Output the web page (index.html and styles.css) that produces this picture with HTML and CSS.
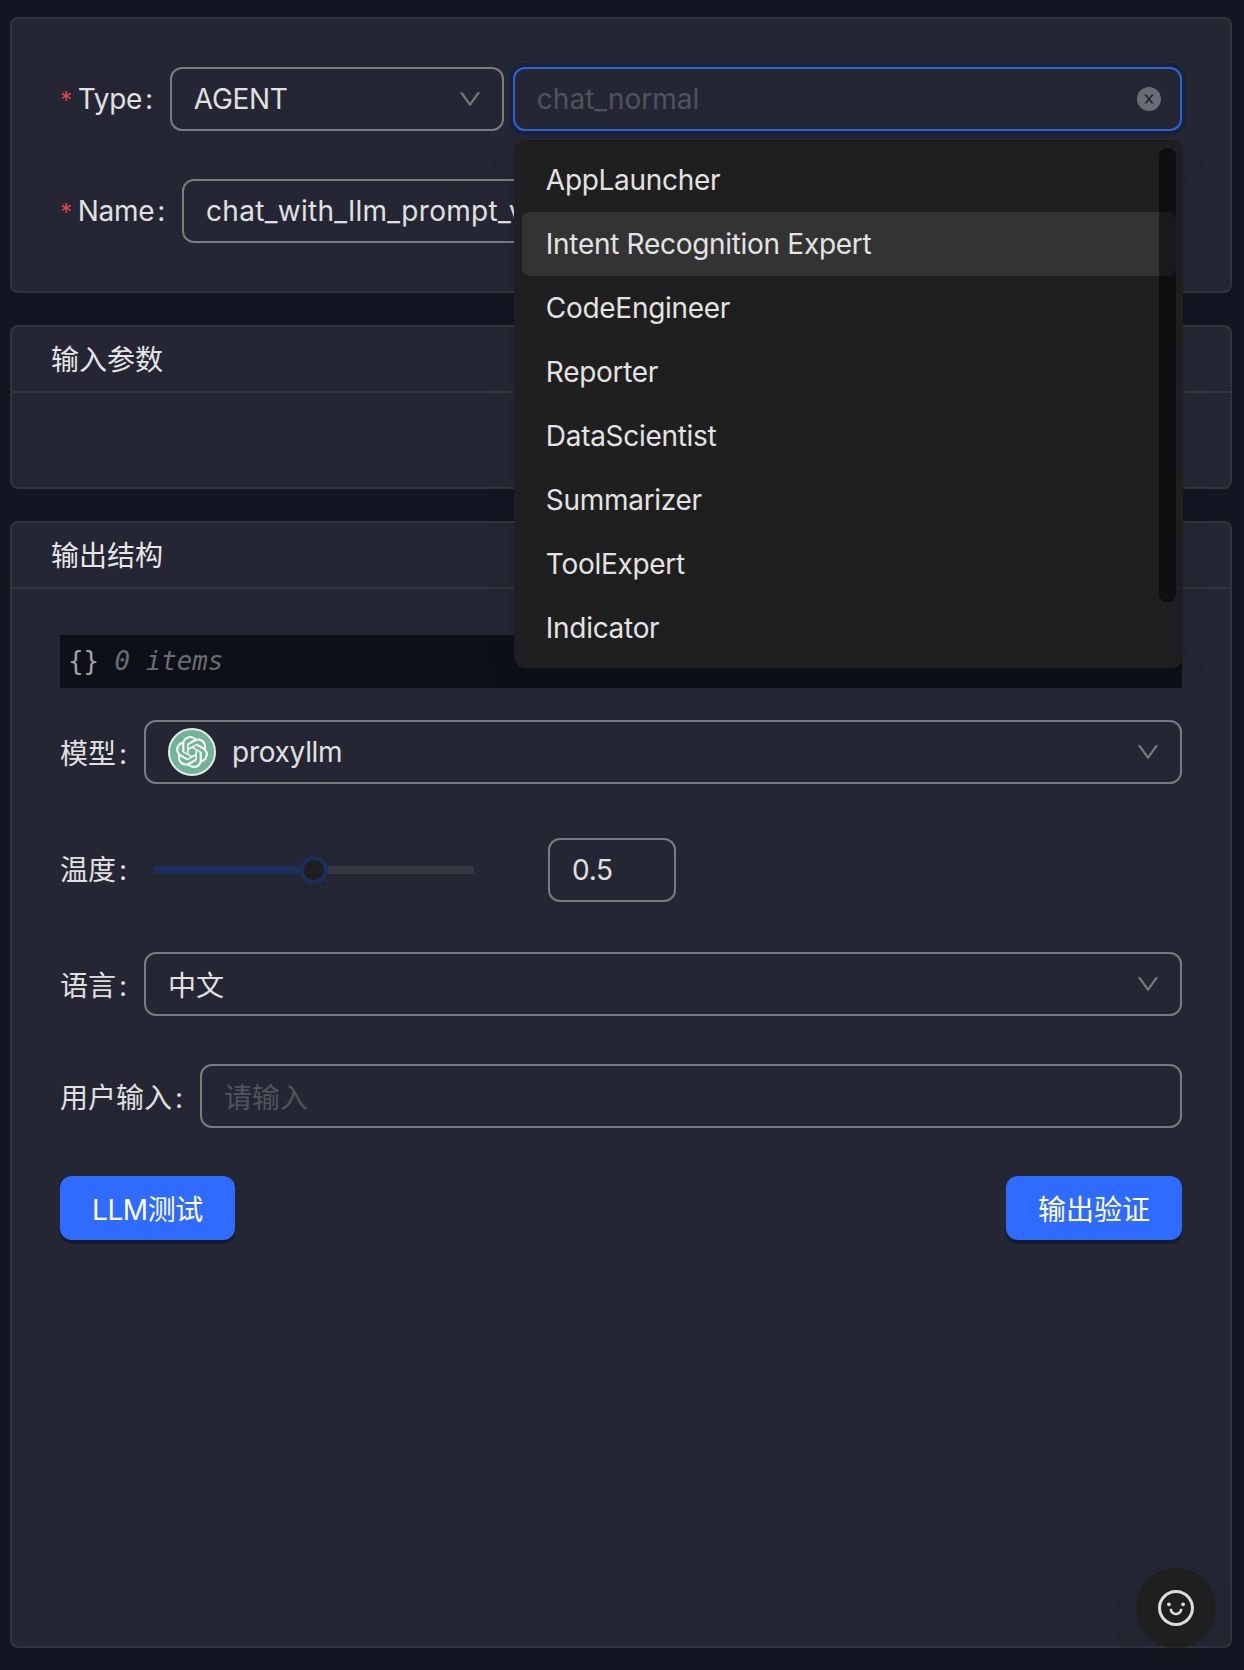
FILE: index.html
```html
<!DOCTYPE html>
<html lang="zh">
<head>
    <meta charset="UTF-8">
    <title>Prompt</title>
    <link rel="stylesheet" href="styles.css">
</head>
<body>

    <div class="card card-form">
        <div class="row">
            <div class="label required latin">Type<span class="colon">:</span></div>
            <div class="control type-select">
                <span class="value latin">AGENT</span>
                <svg class="arrow" viewBox="64 64 896 896"><path d="M884 256h-75c-5.1 0-9.9 2.5-12.9 6.6L512 654.2 227.9 262.6c-3-4.1-7.8-6.6-12.9-6.6h-75c-6.5 0-10.3 7.4-6.5 12.7l352.6 486.1c12.8 17.6 39 17.6 51.7 0l352.6-486.1c3.9-5.3.1-12.7-6.4-12.7z"/></svg>
            </div>
            <div class="combo">
                <div class="control focused">
                    <span class="placeholder">chat_normal</span>
                    <svg class="clear" viewBox="64 64 896 896"><path d="M512 64C264.6 64 64 264.6 64 512s200.6 448 448 448 448-200.6 448-448S759.4 64 512 64zm165.4 618.2l-66-.3L512 563.4l-99.3 118.4-66.1.3c-4.4 0-8-3.5-8-8 0-1.9.7-3.7 1.9-5.2l130.1-155L340.5 359a8.32 8.32 0 0 1-1.9-5.2c0-4.4 3.6-8 8-8l66.1.3L512 464.6l99.3-118.4 66-.3c4.4 0 8 3.5 8 8 0 1.9-.7 3.7-1.9 5.2L553.5 514l130 155c1.2 1.5 1.9 3.3 1.9 5.2 0 4.4-3.6 8-8 8z"/></svg>
                </div>
                <div class="dropdown latin">
                    <div class="option">AppLauncher</div>
                    <div class="option active">Intent Recognition Expert</div>
                    <div class="option">CodeEngineer</div>
                    <div class="option">Reporter</div>
                    <div class="option">DataScientist</div>
                    <div class="option">Summarizer</div>
                    <div class="option">ToolExpert</div>
                    <div class="option">Indicator</div>
                    <div class="scrollbar"></div>
                </div>
            </div>
        </div>
        <div class="row">
            <div class="label required latin">Name<span class="colon">:</span></div>
            <div class="control"><span class="value name-value">chat_with_llm_prompt_v</span></div>
        </div>
    </div>

    <div class="card">
        <div class="card-head">输入参数</div>
        <div class="card-body empty"></div>
    </div>

    <div class="card card-fill">
        <div class="card-head">输出结构</div>
        <div class="card-body">
            <div class="json"><span class="brace">{}</span> <em>0 items</em></div>

            <div class="row row-model">
                <div class="label cjk">模型<span class="colon">:</span></div>
                <div class="control">
                    <span class="model-icon">
                        <svg viewBox="0 0 24 24"><path d="M22.2819 9.8211a5.9847 5.9847 0 0 0-.5157-4.9108 6.0462 6.0462 0 0 0-6.5098-2.9A6.0651 6.0651 0 0 0 4.9807 4.1818a5.9847 5.9847 0 0 0-3.9977 2.9 6.0462 6.0462 0 0 0 .7427 7.0966 5.98 5.98 0 0 0 .511 4.9107 6.051 6.051 0 0 0 6.5146 2.9001A5.9847 5.9847 0 0 0 13.2599 24a6.0557 6.0557 0 0 0 5.7718-4.2058 5.9894 5.9894 0 0 0 3.9977-2.9001 6.0557 6.0557 0 0 0-.7475-7.0729zm-9.022 12.6081a4.4755 4.4755 0 0 1-2.8764-1.0408l.1419-.0804 4.7783-2.7582a.7948.7948 0 0 0 .3927-.6813v-6.7369l2.02 1.1686a.071.071 0 0 1 .038.052v5.5826a4.504 4.504 0 0 1-4.4945 4.4944zm-9.6607-4.1254a4.4708 4.4708 0 0 1-.5346-3.0137l.142.0852 4.783 2.7582a.7712.7712 0 0 0 .7806 0l5.8428-3.3685v2.3324a.0804.0804 0 0 1-.0332.0615L9.74 19.9502a4.4992 4.4992 0 0 1-6.1408-1.6464zM2.3408 7.8956a4.485 4.485 0 0 1 2.3655-1.9728V11.6a.7664.7664 0 0 0 .3879.6765l5.8144 3.3543-2.0201 1.1685a.0757.0757 0 0 1-.071 0l-4.8303-2.7865A4.504 4.504 0 0 1 2.3408 7.872zm16.5963 3.8558L13.1038 8.364 15.1192 7.2a.0757.0757 0 0 1 .071 0l4.8303 2.7913a4.4944 4.4944 0 0 1-.6765 8.1042v-5.6772a.79.79 0 0 0-.407-.667zm2.0107-3.0231l-.142-.0852-4.7735-2.7818a.7759.7759 0 0 0-.7854 0L9.409 9.2297V6.8974a.0662.0662 0 0 1 .0284-.0615l4.8303-2.7866a4.4992 4.4992 0 0 1 6.6802 4.66zM8.3065 12.863l-2.02-1.1638a.0804.0804 0 0 1-.038-.0567V6.0742a4.4992 4.4992 0 0 1 7.3757-3.4537l-.142.0805L8.704 5.459a.7948.7948 0 0 0-.3927.6813zm1.0976-2.3654l2.602-1.4998 2.6069 1.4998v2.9994l-2.5974 1.4997-2.6067-1.4997Z"/></svg>
                    </span>
                    <span class="value latin">proxyllm</span>
                    <svg class="arrow" viewBox="64 64 896 896"><path d="M884 256h-75c-5.1 0-9.9 2.5-12.9 6.6L512 654.2 227.9 262.6c-3-4.1-7.8-6.6-12.9-6.6h-75c-6.5 0-10.3 7.4-6.5 12.7l352.6 486.1c12.8 17.6 39 17.6 51.7 0l352.6-486.1c3.9-5.3.1-12.7-6.4-12.7z"/></svg>
                </div>
            </div>

            <div class="row row-temp">
                <div class="label">温度<span class="colon">:</span></div>
                <div class="slider">
                    <div class="slider-fill"></div>
                    <div class="slider-handle"></div>
                </div>
                <div class="control number"><span class="value latin">0.5</span></div>
            </div>

            <div class="row row-lang">
                <div class="label cjk">语言<span class="colon">:</span></div>
                <div class="control">
                    <span class="value cjk">中文</span>
                    <svg class="arrow" viewBox="64 64 896 896"><path d="M884 256h-75c-5.1 0-9.9 2.5-12.9 6.6L512 654.2 227.9 262.6c-3-4.1-7.8-6.6-12.9-6.6h-75c-6.5 0-10.3 7.4-6.5 12.7l352.6 486.1c12.8 17.6 39 17.6 51.7 0l352.6-486.1c3.9-5.3.1-12.7-6.4-12.7z"/></svg>
                </div>
            </div>

            <div class="row row-input">
                <div class="label cjk">用户输入<span class="colon">:</span></div>
                <div class="control"><span class="placeholder cjk">请输入</span></div>
            </div>

            <div class="actions">
                <button class="btn btn-llm">LLM测试</button>
                <button class="btn">输出验证</button>
            </div>
        </div>
    </div>

    <div class="float-btn">
        <svg viewBox="64 64 896 896"><path d="M288 421a48 48 0 1 0 96 0 48 48 0 1 0-96 0zm352 0a48 48 0 1 0 96 0 48 48 0 1 0-96 0zM512 64C264.6 64 64 264.6 64 512s200.6 448 448 448 448-200.6 448-448S759.4 64 512 64zm263 711c-34.2 34.2-74 61-118.3 79.8C611 874.2 562.3 884 512 884c-50.3 0-99-9.8-144.8-29.2A370.4 370.4 0 0 1 248.9 775c-34.2-34.2-61-74-79.8-118.3C149.8 611 140 562.3 140 512s9.8-99 29.2-144.8A370.4 370.4 0 0 1 249 248.9c34.2-34.2 74-61 118.3-79.8C413 149.8 461.7 140 512 140c50.3 0 99 9.8 144.8 29.2A370.4 370.4 0 0 1 775.1 249c34.2 34.2 61 74 79.8 118.3C874.2 413 884 461.7 884 512s-9.8 99-29.2 144.8A368.89 368.89 0 0 1 775 775zM664 533h-48.1c-4.2 0-7.8 3.2-8.1 7.4C604 589.9 562.5 629 512 629s-92.1-39.1-95.8-88.6c-.3-4.2-3.9-7.4-8.1-7.4H360a8 8 0 0 0-8 8.4c4.4 84.3 74.5 151.6 160 151.6s155.6-67.3 160-151.6a8 8 0 0 0-8-8.4z"/></svg>
    </div>

</body>
</html>
```

FILE: styles.css
```css
html, body {
    margin: 0;
    height: 100%;
}

body {
    background-color: #141522;
    color: #e0e0e1;
    font-family: Inter, "Noto Sans CJK SC", sans-serif;
    font-size: 28px;
    line-height: 40px;
    box-sizing: border-box;
    min-height: 1670px;
    padding: 17px 12px 22px 10px;
    display: flex;
    flex-direction: column;
    gap: 32px;
}

.latin {
    letter-spacing: -0.3px;
}

.cjk {
    padding-top: 3px;
}

.card {
    background-color: #242733;
    border: 2px solid #32343b;
    border-radius: 8px;
}

.card-form {
    padding: 48px 48px 0;
}

.card-fill {
    flex: 1;
}

.card-head {
    height: 64px;
    padding: 0 39px;
    line-height: 66px;
    border-bottom: 2px solid #32343b;
    color: #e6e6e7;
}

.card-body {
    padding: 46px 48px 0;
}

.empty {
    height: 48px;
}

.row {
    display: flex;
    align-items: center;
    margin-bottom: 48px;
    position: relative;
}

.label {
    flex: none;
    white-space: nowrap;
}

.colon {
    margin: 0 17px 0 3px;
}

.required {
    padding-top: 2px;
}

.required::before {
    content: "*";
    color: #dc4446;
    margin-right: 6px;
    font-size: 24px;
}

.control {
    flex: 1;
    height: 64px;
    box-sizing: border-box;
    border: 2px solid #7b7b7e;
    border-radius: 12px;
    padding: 0 20px 0 22px;
    display: flex;
    align-items: center;
    justify-content: space-between;
    min-width: 0;
}

.type-select {
    flex: none;
    width: 334px;
    margin-right: 9px;
}

.value {
    white-space: nowrap;
}

.name-value {
    letter-spacing: 0.3px;
}

.placeholder {
    color: #50525d;
}

.arrow {
    width: 24px;
    height: 24px;
    fill: #77787e;
    flex: none;
}

.combo {
    flex: 1;
    position: relative;
    display: flex;
}

.focused {
    border-color: #2b63d6;
    box-shadow: 0 0 0 4px #1a2239;
    padding-right: 19px;
}

.clear {
    width: 24px;
    height: 24px;
    fill: #6a6c75;
    flex: none;
}

.dropdown {
    position: absolute;
    top: 73px;
    left: 1px;
    width: 669px;
    box-sizing: border-box;
    padding: 8px 7px 8px 8px;
    background-color: #1f1f1f;
    border-radius: 12px;
    box-shadow: 0 12px 32px rgba(0, 0, 0, 0.08);
    z-index: 5;
}

.option {
    height: 64px;
    line-height: 64px;
    padding: 0 24px;
    border-radius: 8px;
    color: #e3e3e3;
}

.option.active {
    background-color: #333333;
}

.scrollbar {
    position: absolute;
    top: 8px;
    right: 7px;
    width: 17px;
    height: 454px;
    border-radius: 8px;
    background-color: rgba(0, 0, 0, 0.5);
}

.json {
    height: 53px;
    background-color: #0d1117;
    padding-left: 8px;
    font-family: "DejaVu Sans Mono", monospace;
    font-size: 25.8px;
    line-height: 52px;
    color: #6a6c6f;
    margin-bottom: 32px;
    white-space: pre;
}

.brace {
    color: #a0a3a8;
}

.row-model {
    margin-bottom: 54px;
}

.row-model .control {
    justify-content: flex-start;
}

.row-model .arrow {
    margin-left: auto;
}

.model-icon {
    width: 48px;
    height: 48px;
    box-sizing: border-box;
    border-radius: 50%;
    background-color: #72b596;
    border: 2px solid #e4e9e7;
    display: flex;
    align-items: center;
    justify-content: center;
    margin-right: 16px;
    flex: none;
}

.model-icon svg {
    width: 32px;
    height: 32px;
    fill: #fff;
}

.row-temp {
    margin-bottom: 50px;
}

.slider {
    flex: none;
    width: 320px;
    height: 8px;
    margin: 0 74px 0 10px;
    background-color: #343742;
    border-radius: 2px;
    position: relative;
}

.slider-fill {
    width: 50%;
    height: 100%;
    background-color: #1b2f5c;
    border-radius: 2px 0 0 2px;
}

.slider-handle {
    position: absolute;
    left: 146px;
    top: -10px;
    width: 28px;
    height: 28px;
    box-sizing: border-box;
    border-radius: 50%;
    background-color: #1f1f1f;
    border: 4px solid #1b2f5c;
}

.number {
    flex: none;
    width: 128px;
}

.actions {
    display: flex;
    justify-content: space-between;
}

.btn {
    height: 64px;
    padding: 0 32px;
    border: none;
    border-radius: 12px;
    background-color: #2f6bff;
    color: #fff;
    font-family: inherit;
    font-size: 28px;
    box-shadow: 0 4px 0 #171b2c;
}

.btn-llm {
    letter-spacing: -0.4px;
}

.float-btn {
    position: fixed;
    right: 28px;
    bottom: 22px;
    width: 80px;
    height: 80px;
    border-radius: 50%;
    background-color: #1f1f1f;
    box-shadow: 0 12px 32px rgba(0, 0, 0, 0.08);
    display: flex;
    align-items: center;
    justify-content: center;
}

.float-btn svg {
    width: 36px;
    height: 36px;
    fill: #dcdcdc;
}
```
